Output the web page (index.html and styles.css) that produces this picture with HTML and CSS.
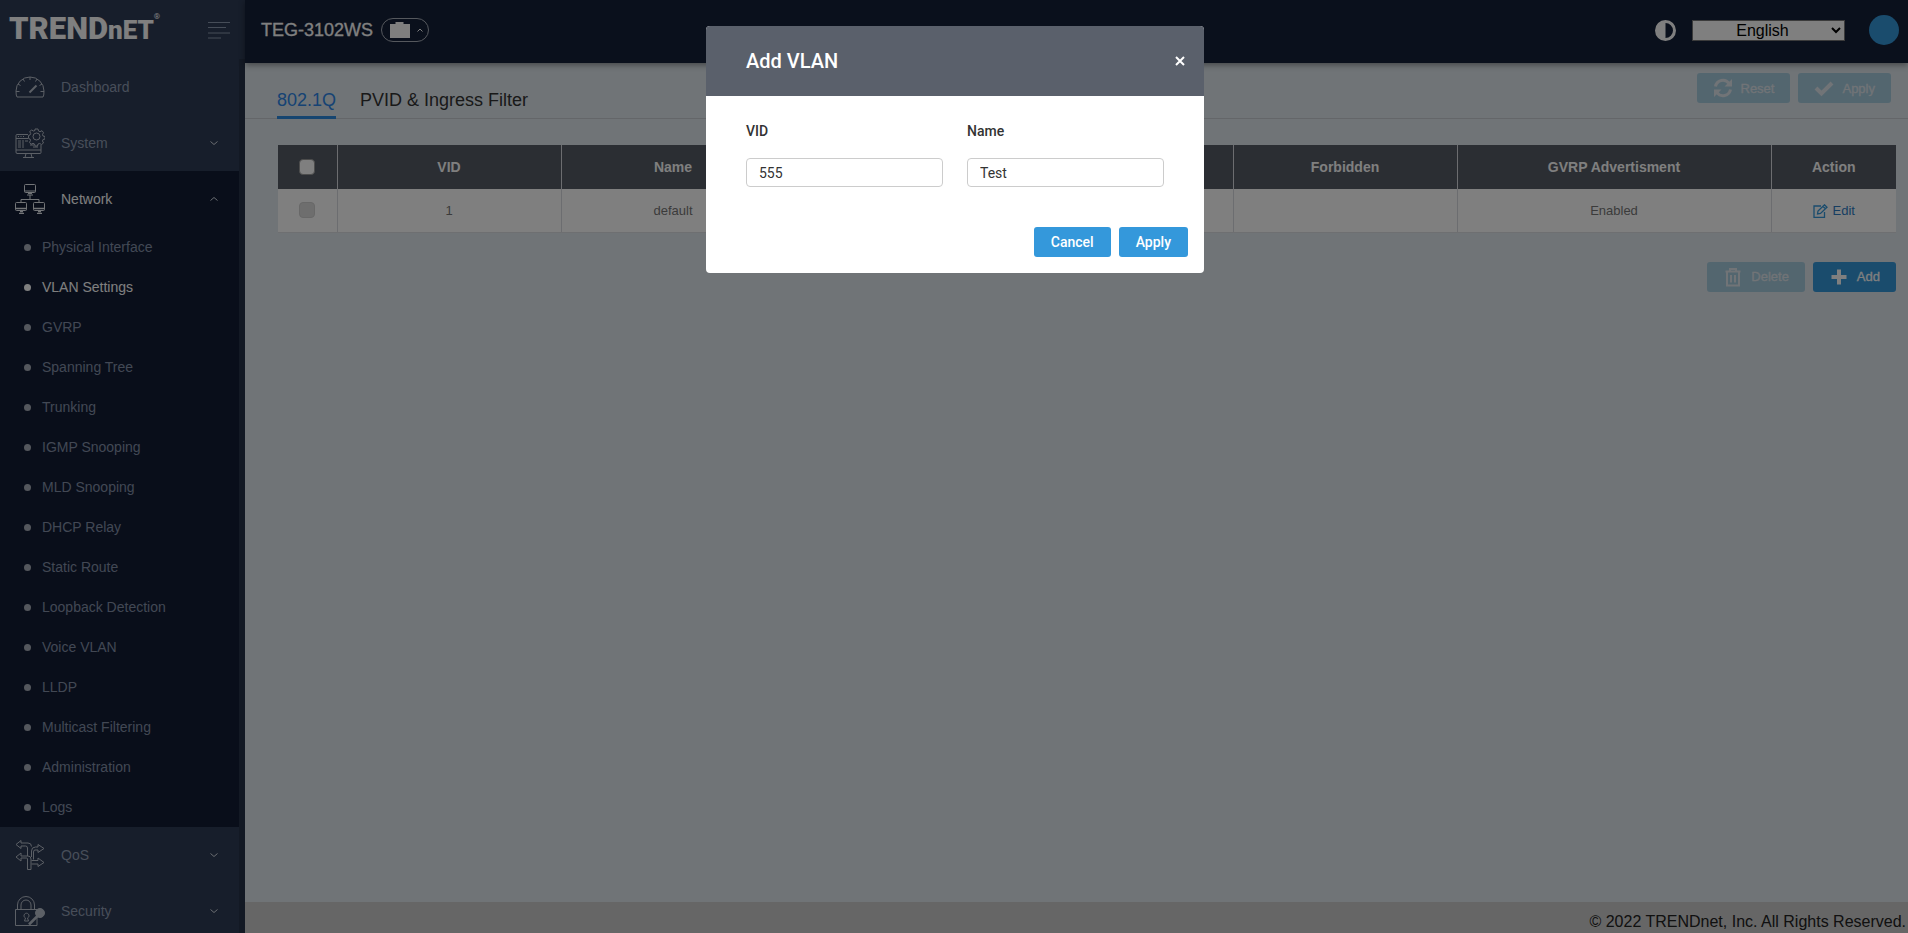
FILE: index.html
```html
<!DOCTYPE html>
<html lang="en">
<head>
    <meta charset="UTF-8">
    <meta name="viewport" content="width=device-width, initial-scale=1.0">
    <title>TEG-3102WS</title>
    <link rel="stylesheet" href="styles.css">
</head>
<body>
    <div class="page">
        <aside class="sidebar">
            <div class="brand">
                <a class="logo" href="#">TREND<span class="logo-net">nET</span><sup>®</sup></a>
                <button type="button" class="menu-toggle" aria-label="Toggle menu">
                    <svg width="22" height="18" viewBox="0 0 22 18" stroke="currentColor"><path d="M0 1.5h22M0 6.5h18M0 12h22M0 17h13"/></svg>
                </button>
            </div>
            <nav class="menu">
                <a class="menu-item" href="#">
                    <svg class="menu-icon" viewBox="0 0 30 30"><path d="M2 25h26q1-1 1-6a14 14 0 0 0-28 0q0 5 1 6zM15 5v3M8 7l1.500 2.500M22 7l-1.500 2.500M3 12l2.500 1.500M27 12l-2.500 1.500M1 19.500h3.500M29 19.500h-3.500"/><path d="M14.500 20.500l7-7" stroke-width="2"/></svg>
                    <span>Dashboard</span>
                </a>
                <a class="menu-item" href="#">
                    <svg class="menu-icon" viewBox="0 0 30 30"><path d="M13 6.500H2q-1 0-1 1V24q0 1.500 1 1.500h23q1 0 1-1V17M1 22h25M11 25.500l-1 4M16 25.500l1 4M8 29.500h11M1 10.500h12M3 8.500h1M5.500 8.500h1M8 8.500h1M3 13h3M3 15h3M3 17h3M3 19h3M8 12v8M10 13h3M15 17h4M18 19h5"/><circle cx="21.500" cy="8.500" r="3.500"/><path d="M20 1h3l.5 2 1.500.700 2-1 1.500 2-1 1.800.5 1.500 2 .5v2.500l-2 .5-.5 1.500 1 2-2 1.500-1.800-1-1.700.5-.5 2h-2.500l-.5-2-1.500-.7-2 1-1.500-2 1-1.800-.5-1.500-1.500-.5V7.500l1.500-.5.700-1.500-1-2 2-1.500 1.800 1 1.500-.5z"/></svg>
                    <span>System</span>
                    <svg class="chevron" viewBox="0 0 10 10"><path d="M1.500 3.500l3.500 3 3.500-3"/></svg>
                </a>
                <a class="menu-item open" href="#">
                    <svg class="menu-icon" viewBox="0 0 30 30"><rect x="9.500" y=".5" width="11" height="8" rx="1"/><path d="M9.500 7h11M13 9.500h4M12 11h6M15 11v4.500M6 18v-2.500h18V18"/><rect x=".5" y="18.500" width="11" height="8" rx="1"/><rect x="18.500" y="18.500" width="11" height="8" rx="1"/><path d="M.5 24.500h11M18.500 24.500h11M4 29.500h5M5 27.500h3M22 29.500h5M23 27.500h3" stroke-width="1.500"/></svg>
                    <span>Network</span>
                    <svg class="chevron" viewBox="0 0 10 10"><path d="M1.500 6.500l3.500-3 3.500 3"/></svg>
                </a>
                <ul class="submenu">
                    <li><a href="#">Physical Interface</a></li>
                    <li class="active"><a href="#">VLAN Settings</a></li>
                    <li><a href="#">GVRP</a></li>
                    <li><a href="#">Spanning Tree</a></li>
                    <li><a href="#">Trunking</a></li>
                    <li><a href="#">IGMP Snooping</a></li>
                    <li><a href="#">MLD Snooping</a></li>
                    <li><a href="#">DHCP Relay</a></li>
                    <li><a href="#">Static Route</a></li>
                    <li><a href="#">Loopback Detection</a></li>
                    <li><a href="#">Voice VLAN</a></li>
                    <li><a href="#">LLDP</a></li>
                    <li><a href="#">Multicast Filtering</a></li>
                    <li><a href="#">Administration</a></li>
                    <li><a href="#">Logs</a></li>
                </ul>
                <a class="menu-item" href="#">
                    <svg class="menu-icon" viewBox="0 0 30 30"><path d="M12.500 29.500V19q0-1-1-1H6v3l-5-4 5-4v3h7q3 0 3 3v10.500zM12.500 16V8q0-2-2-2H6v2.500L1 4.500 6 .5V3h7q3.500 0 3.500 3.500M16.500 17v-6q0-4 4-4H23V4.500l6 4-6 4V10h-3q-1.500 0-1.500 2v7.500M16.500 20.500H23V18l6 4.500-6 4V24h-6.500"/></svg>
                    <span>QoS</span>
                    <svg class="chevron" viewBox="0 0 10 10"><path d="M1.500 3.500l3.500 3 3.500-3"/></svg>
                </a>
                <a class="menu-item" href="#">
                    <svg class="menu-icon" viewBox="0 0 30 30"><path d="M.5 13.500H22V29.500H.5zM2.500 13.500V9a8.500 8.500 0 0 1 17 0v4.500M6 13.500V9a5 5 0 0 1 10 0v4.500M9.500 25l1-3a2.500 2.500 0 1 1 2 0l1 3z"/><circle cx="25" cy="17" r="4.500" class="solid"/><path d="M23 19.500l-9 9" stroke-width="2.500"/></svg>
                    <span>Security</span>
                    <svg class="chevron" viewBox="0 0 10 10"><path d="M1.500 3.500l3.500 3 3.500-3"/></svg>
                </a>
            </nav>
        </aside>

        <div class="main">
            <header class="topbar">
                <h1>TEG-3102WS</h1>
                <button type="button" class="port-btn" aria-label="Show ports">
                    <svg width="20" height="16" viewBox="0 0 20 16" fill="currentColor"><path d="M0 2h5.500V0h8v2H20v14H0z"/></svg>
                    <svg class="chevron-sm" viewBox="0 0 8 8"><path d="M1.500 5.500l2.500-2.500 2.500 2.500"/></svg>
                </button>
                <div class="topbar-right">
                    <button type="button" class="contrast-btn" aria-label="Contrast">
                        <svg width="21" height="21" viewBox="0 0 21 21"><circle cx="10.500" cy="10.500" r="9" fill="none" stroke="currentColor" stroke-width="3"/><path d="M10.500 1.500a9 9 0 0 0 0 18z" fill="currentColor"/></svg>
                    </button>
                    <select class="language" aria-label="Language">
                        <option>English</option>
                    </select>
                    <button type="button" class="avatar" aria-label="Account"></button>
                </div>
            </header>

            <div class="tabbar">
                <nav class="tabs">
                    <a class="tab active" href="#">802.1Q</a>
                    <a class="tab" href="#">PVID &amp; Ingress Filter</a>
                </nav>
                <div class="actions">
                    <button type="button" class="btn" disabled>
                        <svg viewBox="0 0 20 20" class="line"><path d="M2.500 8.500a7.500 7.500 0 0 1 13.500-3M17.500 11.500a7.500 7.500 0 0 1-13.500 3"/><path class="solid" d="M19 1v7.500h-7.500zM1 19v-7.500h7.500z"/></svg>
                        Reset
                    </button>
                    <button type="button" class="btn" disabled>
                        <svg viewBox="0 0 20 20" class="line heavy"><path d="M2 10l5.500 5.500L18 5"/></svg>
                        Apply
                    </button>
                </div>
            </div>

            <main class="content">
                <table class="vlan-table">
                    <colgroup>
                        <col class="col-check">
                        <col span="5">
                        <col class="col-gvrp">
                        <col class="col-action">
                    </colgroup>
                    <thead>
                        <tr>
                            <th><input type="checkbox" aria-label="Select all"></th>
                            <th>VID</th>
                            <th>Name</th>
                            <th></th>
                            <th></th>
                            <th>Forbidden</th>
                            <th>GVRP Advertisment</th>
                            <th>Action</th>
                        </tr>
                    </thead>
                    <tbody>
                        <tr>
                            <td><input type="checkbox" aria-label="Select VLAN 1" disabled></td>
                            <td>1</td>
                            <td>default</td>
                            <td></td>
                            <td></td>
                            <td></td>
                            <td>Enabled</td>
                            <td>
                                <a class="edit" href="#"><svg width="15" height="14" viewBox="0 0 15 14"><path d="M8 2H1v11.300h10.500V8"/><path d="M4.500 10l.5-3L11.500.8l2.500 2.400L7.500 9.500zM10 2.500l2.500 2.300"/></svg>Edit</a>
                            </td>
                        </tr>
                    </tbody>
                </table>
                <div class="table-actions">
                    <button type="button" class="btn" disabled>
                        <svg viewBox="0 0 20 20" class="line thin"><path d="M2.500 4.500h15M7 4.500V2h6v2.500M4 5v13.500h12V5M8 8v7.500M12 8v7.500"/></svg>
                        Delete
                    </button>
                    <button type="button" class="btn">
                        <svg viewBox="0 0 20 20" class="line heavy"><path d="M10 2.500v15M2.500 10h15"/></svg>
                        Add
                    </button>
                </div>
            </main>

            <footer class="footer">© 2022 TRENDnet, Inc. All Rights Reserved.</footer>
        </div>
    </div>

    <div class="backdrop">
        <form class="modal" role="dialog" aria-labelledby="modalTitle">
            <div class="modal-header">
                <h2 id="modalTitle">Add VLAN</h2>
                <button type="button" class="close" aria-label="Close">
                    <svg width="10" height="10" viewBox="0 0 10 10"><path d="M1 1l8 8M9 1l-8 8"/></svg>
                </button>
            </div>
            <div class="modal-body">
                <div class="form-group">
                    <label for="vid">VID</label>
                    <input type="text" id="vid" name="vid" value="555">
                </div>
                <div class="form-group">
                    <label for="name">Name</label>
                    <input type="text" id="name" name="name" value="Test">
                </div>
            </div>
            <div class="modal-footer">
                <button type="button" class="modal-btn">Cancel</button>
                <button type="submit" class="modal-btn">Apply</button>
            </div>
        </form>
    </div>
</body>
</html>
```
FILE: styles.css
```css
* {
    margin: 0;
    padding: 0;
    box-sizing: border-box;
}

body {
    font-family: "Liberation Sans", Arial, sans-serif;
    font-size: 14px;
    color: #333;
    overflow: hidden;
}

a {
    text-decoration: none;
    color: inherit;
}

button {
    border: none;
    background: none;
    font-family: inherit;
    cursor: pointer;
}

.page {
    display: flex;
    height: 100vh;
}

/* Sidebar */
.sidebar {
    width: 245px;
    flex-shrink: 0;
    background-color: #2e3c56;
    overflow: hidden;
}

.brand {
    display: flex;
    align-items: center;
    justify-content: space-between;
    height: 59px;
    padding: 0 15px 0 9px;
}

.logo {
    font-family: Roboto, sans-serif;
    font-size: 31px;
    font-weight: 900;
    line-height: 40px;
    color: #fff;
    white-space: nowrap;
}

.logo-net {
    font-size: 26px;
}

.logo sup {
    font-size: 8px;
    font-weight: 400;
    line-height: 8px;
    vertical-align: 20px;
}

.menu-toggle {
    color: #8d9bb0;
    line-height: 0;
}

.menu {
    border-right: 6px solid #273349;
}

.menu-item {
    display: flex;
    align-items: center;
    gap: 16px;
    height: 56px;
    padding: 0 20px 0 15px;
    color: #909cb3;
}

.menu-item span {
    flex: 1;
}

.menu-item.open {
    background-color: #121d35;
    color: #fff;
}

.menu-icon {
    width: 30px;
    height: 30px;
    fill: none;
    stroke: #b9c0cc;
}

.open .menu-icon {
    stroke: #e4e8ee;
}

.menu-icon .solid {
    fill: #b9c0cc;
}

.chevron {
    width: 10px;
    height: 10px;
    fill: none;
    stroke: #d5dae2;
}

.submenu {
    list-style: none;
    background-color: #121d35;
    color: #8490a8;
}

.submenu a {
    display: flex;
    align-items: center;
    gap: 11px;
    height: 40px;
    padding-left: 24px;
}

.submenu a::before {
    content: "";
    width: 7px;
    height: 7px;
    border-radius: 50%;
    background-color: #a9afba;
}

.submenu .active {
    color: #fff;
}

.submenu .active a::before {
    background-color: #fff;
}

/* Right side */
.main {
    flex: 1;
    display: flex;
    flex-direction: column;
    background-color: #e0e8ee;
}

.topbar {
    display: flex;
    align-items: center;
    gap: 8px;
    height: 63px;
    padding: 0 9px 3px 16px;
    background-color: #142038;
    color: #fff;
    box-shadow: 0 2px 6px rgba(0, 0, 0, 0.4);
    z-index: 1;
}

.topbar h1 {
    font-size: 18px;
    font-weight: 400;
    -webkit-text-stroke: 0.3px #fff;
}

.port-btn {
    display: flex;
    align-items: center;
    gap: 6px;
    height: 24px;
    padding: 0 4px 0 8px;
    border: 1px solid #aab0bb;
    border-radius: 12px;
    color: #fff;
}

.chevron-sm {
    width: 8px;
    height: 8px;
    fill: none;
    stroke: #fff;
}

.topbar-right {
    display: flex;
    align-items: center;
    margin-left: auto;
}

.contrast-btn {
    color: #fff;
    line-height: 0;
}

.language {
    width: 153px;
    height: 21px;
    margin: 0 24px 0 16px;
    border: 1px solid #767676;
    background-color: #fff;
    color: #000;
    font-family: inherit;
    font-size: 16px;
    text-align: center;
}

.avatar {
    width: 30px;
    height: 30px;
    border-radius: 50%;
    background-color: #3498db;
}

.tabbar {
    display: flex;
    justify-content: space-between;
    height: 56px;
    padding: 0 17px 0 32px;
    border-bottom: 1px solid #c8cdd2;
}

.tabs {
    display: flex;
    gap: 24px;
    margin-bottom: -1px;
}

.tab {
    padding-top: 19px;
    font-size: 18px;
    line-height: 36px;
}

.tab.active {
    color: #2c86e8;
    border-bottom: 3px solid #2c8ae0;
}

.actions {
    display: flex;
    gap: 8px;
    padding-top: 10px;
}

.btn {
    display: flex;
    align-items: center;
    gap: 8px;
    height: 30px;
    padding: 0 16px;
    border-radius: 3px;
    background-color: #3498db;
    color: #fff;
    font-size: 13px;
    -webkit-text-stroke: 0.3px #fff;
}

.btn:disabled {
    background-color: #a6ccdf;
    color: #e2e8ee;
    -webkit-text-stroke-color: #e2e8ee;
    cursor: default;
}

.btn svg {
    width: 20px;
    height: 20px;
}

.line {
    fill: none;
    stroke: currentColor;
    stroke-width: 3;
}

.line.thin {
    stroke-width: 2;
}

.line.heavy {
    stroke-width: 4;
}

.line .solid {
    fill: currentColor;
    stroke: none;
}

.content {
    flex: 1;
    padding: 26px 12px 0 33px;
}

.vlan-table {
    width: 100%;
    table-layout: fixed;
    border-collapse: collapse;
    font-size: 13px;
    text-align: center;
}

.col-check {
    width: 59px;
}

.col-gvrp {
    width: 314px;
}

.col-action {
    width: 125px;
}

.vlan-table th {
    height: 44px;
    background-color: #565c66;
    color: #fff;
    font-size: 14px;
}

.vlan-table td {
    height: 43px;
    background-color: #fff;
    color: #777;
    border-bottom: 1px solid #dcdfe3;
}

.vlan-table th + th,
.vlan-table td + td {
    border-left: 1px solid #d8dbe0;
}

.vlan-table input {
    appearance: none;
    display: block;
    width: 16px;
    height: 16px;
    margin: 0 auto;
    border: 1px solid #999;
    border-radius: 4px;
    background-color: #fff;
}

.vlan-table input:disabled {
    border-color: #d0d0d0;
    background-color: #dcdcdc;
}

.edit {
    display: inline-flex;
    align-items: center;
    gap: 5px;
    vertical-align: middle;
    color: #2f7cc4;
}

.edit svg {
    fill: none;
    stroke: #3498db;
    stroke-width: 1.3;
}

.table-actions {
    display: flex;
    justify-content: flex-end;
    gap: 8px;
    padding-top: 29px;
}

.footer {
    height: 31px;
    padding-right: 2px;
    background-color: #ccc;
    color: #222;
    font-size: 16px;
    line-height: 40px;
    text-align: right;
}

/* Add VLAN dialog */
.backdrop {
    position: fixed;
    inset: 0;
    display: flex;
    justify-content: center;
    align-items: flex-start;
    padding: 26px 0 0 2px;
    background-color: rgba(0, 0, 0, 0.5);
    z-index: 10;
    font-family: Roboto, sans-serif;
}

.modal {
    width: 498px;
    background-color: #fff;
    border-radius: 4px;
    overflow: hidden;
}

.modal-header {
    display: flex;
    align-items: center;
    justify-content: space-between;
    height: 70px;
    padding: 0 19px 0 40px;
    background-color: #5a606b;
    color: #fff;
}

.modal-header h2 {
    font-size: 20px;
    font-weight: 500;
}

.close {
    line-height: 0;
}

.close svg {
    stroke: #fff;
    stroke-width: 2;
}

.modal-body {
    display: flex;
    gap: 24px;
    padding: 26px 40px 40px;
}

.form-group {
    flex: 1;
}

.form-group label {
    display: block;
    margin-bottom: 18px;
    font-weight: 500;
    line-height: 18px;
}

.form-group input {
    display: block;
    width: 100%;
    height: 29px;
    padding: 0 12px;
    border: 1px solid #ccc;
    border-radius: 4px;
    font-family: inherit;
    font-size: 14px;
    color: #333;
}

.modal-footer {
    display: flex;
    justify-content: flex-end;
    gap: 8px;
    padding: 0 16px 16px;
}

.modal-btn {
    height: 30px;
    padding: 0 17px;
    border-radius: 3px;
    background-color: #3498db;
    color: #fff;
    font-size: 14px;
    font-weight: 500;
}
```
